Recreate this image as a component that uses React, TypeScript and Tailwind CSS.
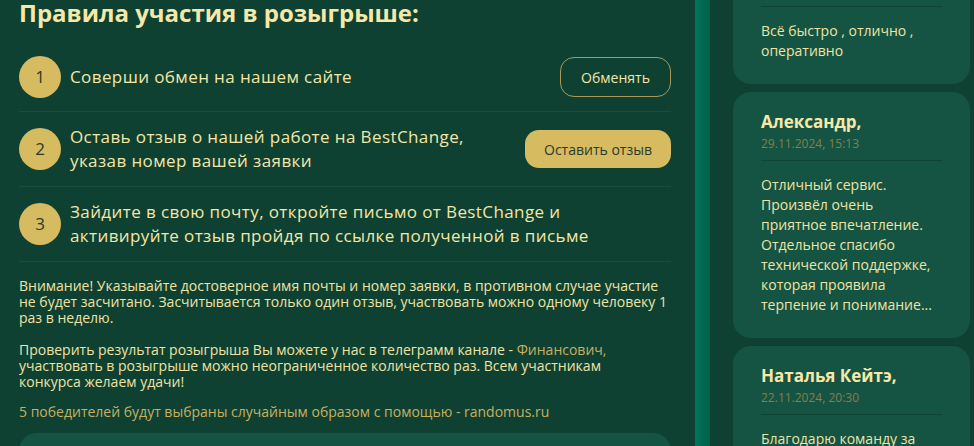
import React from 'react';

type Review = {
  name?: string;
  date?: string;
  lines: string[];
};

const steps = [
  { n: 1, lines: ['Соверши обмен на нашем сайте'], action: 'outline', label: 'Обменять' },
  { n: 2, lines: ['Оставь отзыв о нашей работе на BestChange,', 'указав номер вашей заявки'], action: 'filled', label: 'Оставить отзыв' },
  { n: 3, lines: ['Зайдите в свою почту, откройте письмо от BestChange и', 'активируйте отзыв пройдя по ссылке полученной в письме'] },
];

const reviews: Review[] = [
  { lines: ['Всё быстро , отлично ,', 'оперативно'] },
  {
    name: 'Александр,',
    date: '29.11.2024, 15:13',
    lines: ['Отличный сервис.', 'Произвёл очень', 'приятное впечатление.', 'Отдельное спасибо', 'технической поддержке,', 'которая проявила', 'терпение и понимание...'],
  },
  { name: 'Наталья Кейтэ,', date: '22.11.2024, 20:30', lines: ['Благодарю команду за', 'оперативную работу'] },
];

const ReviewCard: React.FC<{ review: Review; first?: boolean }> = ({ review, first }) => (
  <div className={first ? 'bg-[#155443] rounded-b-[18px] px-[28px] pt-[20px] pb-[23px] -mt-[14px]' : 'bg-[#155443] rounded-[18px] px-[28px] pt-[19px] pb-[23px] shrink-0'}>
    {review.name && (
      <>
        <div className="text-[17px] leading-[22px] font-bold text-[#f6e8a8]">{review.name}</div>
        <div className="mt-[3px] text-[12px] leading-[16px] text-[#857f4a]">{review.date}</div>
        <div className="mt-[8px]" />
      </>
    )}
    <div className="h-px bg-[#0f4435]" />
    <p className="mt-[14px] text-[14px] leading-[20px] text-[#efe3a3]">
      {review.lines.map((l, i) => (
        <React.Fragment key={i}>
          {l}
          {i < review.lines.length - 1 && <br />}
        </React.Fragment>
      ))}
    </p>
  </div>
);

export default function App() {
  return (
    <div className="w-[974px] h-[446px] overflow-hidden flex bg-[#0f4133]" style={{ fontFamily: '"Open Sans", "Noto Sans", sans-serif' }}>
      {/* rules */}
      <div className="w-[695px] shrink-0 pl-[19px] pr-[24px]">
        <h1 className="text-[24px] leading-[26px] font-bold text-[#f6e8a8] mb-[17px]">Правила участия в розыгрыше:</h1>

        {steps.map((s) => (
          <div key={s.n} className="flex items-center py-[13px] border-b border-[#1a4d3f]">
            <div className="w-[42px] h-[42px] rounded-full bg-[#d6bb61] flex items-center justify-center text-[17px] text-[#2b3a2c] shrink-0">
              {s.n}
            </div>
            <div className="ml-[9px] flex-1 text-[17px] leading-[24px] tracking-[0.4px] text-[#f3e6a6]">
              {s.lines.map((l, i) => (
                <div key={i}>{l}</div>
              ))}
            </div>
            {s.action === 'outline' && (
              <button className="w-[111px] h-[40px] rounded-[14px] border border-[#a89a58] text-[14px] text-[#f3e6a6]">{s.label}</button>
            )}
            {s.action === 'filled' && (
              <button className="w-[146px] h-[38px] rounded-[14px] bg-[#d6bb61] text-[14px] text-[#2b3a2c]">{s.label}</button>
            )}
          </div>
        ))}

        <div className="pt-[16px] text-[14px] leading-[16px] text-[#efe3a3]">
          <p>
            Внимание! Указывайте достоверное имя почты и номер заявки, в противном случае участие
            <br />
            не будет засчитано. Засчитывается только один отзыв, участвовать можно одному человеку 1
            <br />
            раз в неделю.
          </p>
          <p className="mt-[16px]">
            Проверить результат розыгрыша Вы можете у нас в телеграмм канале - <span className="text-[#c6b062]">Финансович,</span>
            <br />
            участвовать в розыгрыше можно неограниченное количество раз. Всем участникам
            <br />
            конкурса желаем удачи!
          </p>
          <p className="mt-[14px] text-[#c6b062]">5 победителей будут выбраны случайным образом с помощью - randomus.ru</p>
        </div>

        <div className="mt-[13px] h-[60px] rounded-t-[18px] bg-[#155443]" />
      </div>

      {/* stripe */}
      <div className="w-[15px] shrink-0 bg-gradient-to-r from-[#00765b] to-[#005f47]" />

      {/* reviews */}
      <div className="w-[237px] shrink-0 ml-[23px] flex flex-col gap-[8px]">
        {reviews.map((r, i) => (
          <ReviewCard key={i} review={r} first={i === 0} />
        ))}
      </div>
    </div>
  );
}
